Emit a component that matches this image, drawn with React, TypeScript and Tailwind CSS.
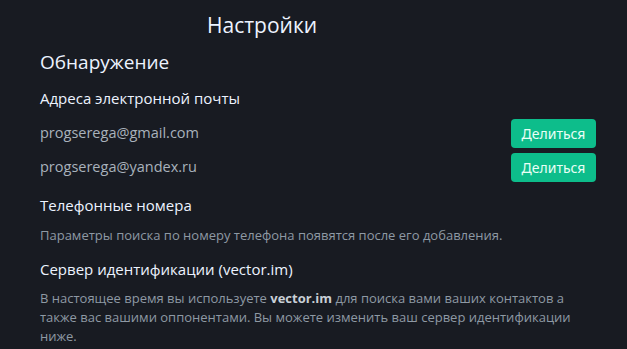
function EmailRow({ email }: { email: string }) {
  return (
    <div className="flex items-center justify-between h-[34px]">
      <span className="text-[14.5px] leading-[34px] text-[#a9b2bc]">{email}</span>
      <button className="h-[29px] w-[85px] rounded-[4px] bg-[#0dbd8b] text-[14px] text-[#e8fff6] font-['Noto_Sans',sans-serif]">
        Делиться
      </button>
    </div>
  );
}

export default function App() {
  return (
    <div className="w-[627px] h-[349px] overflow-hidden bg-[#181b22] font-['Open_Sans','Noto_Sans',sans-serif]">
      <div className="pl-[40px] pr-[31px]">
        <h1 className="pt-[8px] pl-[167px] text-[21px] leading-[34px] text-[#edf3ff]">Настройки</h1>
        <h2 className="mt-[8px] text-[19px] leading-[24px] font-medium text-[#edf3ff]">Обнаружение</h2>
        <h3 className="mt-[13px] text-[15px] leading-[22px] font-medium text-[#edf3ff]">Адреса электронной почты</h3>
        <div className="mt-[7px] flex flex-col">
          <EmailRow email="progserega@gmail.com" />
          <EmailRow email="progserega@yandex.ru" />
        </div>
        <h3 className="mt-[10px] text-[15px] leading-[22px] font-medium text-[#edf3ff]">Телефонные номера</h3>
        <p className="mt-[10px] text-[13px] leading-[19px] text-[#8e99a4]">
          Параметры поиска по номеру телефона появятся после его добавления.
        </p>
        <h3 className="mt-[13px] text-[15px] leading-[22px] font-medium text-[#edf3ff]">Сервер идентификации (vector.im)</h3>
        <p className="mt-[9px] text-[13px] leading-[19px] text-[#8e99a4] pr-[10px]">
          В настоящее время вы используете <b className="font-bold text-[#c8cfd6]">vector.im</b> для поиска вами ваших
          контактов а также вас вашими оппонентами. Вы можете изменить ваш сервер идентификации ниже.
        </p>
      </div>
    </div>
  );
}
